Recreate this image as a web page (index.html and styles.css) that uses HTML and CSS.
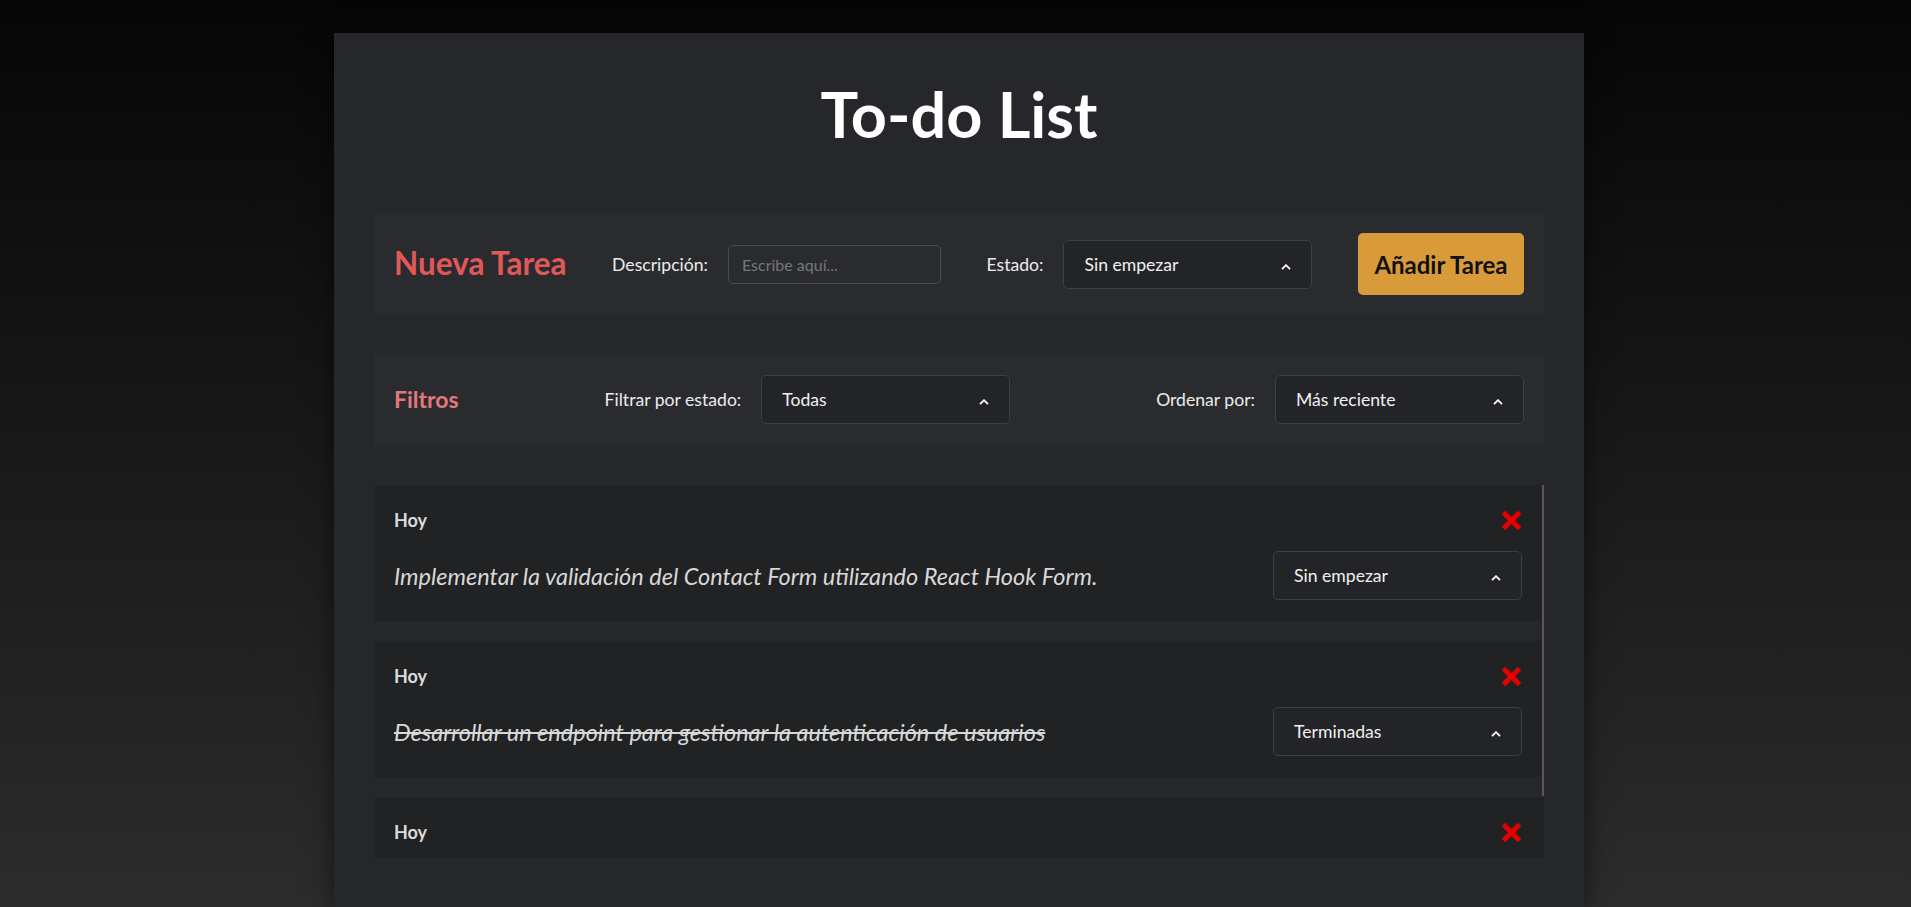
FILE: index.html
```html
<!DOCTYPE html>
<html lang="es">
<head>
<meta charset="utf-8">
<title>To-do List</title>
<link rel="stylesheet" href="styles.css">
</head>
<body>
<div class="page">
  <main class="panel">
    <h1 class="title">To-do List</h1>

    <section class="bar bar-new">
      <h2 class="bar-title">Nueva Tarea</h2>
      <label class="field">
        <span class="field-label">Descripción:</span>
        <input class="text-input" type="text" placeholder="Escribe aquí...">
      </label>
      <label class="field">
        <span class="field-label">Estado:</span>
        <span class="select">
          <select><option>Sin empezar</option><option>En progreso</option><option>Terminadas</option></select>
          <svg class="chev" viewBox="0 0 10 6"><polyline points="1,5.2 5,1.2 9,5.2"/></svg>
        </span>
      </label>
      <button class="add-btn" type="button">Añadir Tarea</button>
    </section>

    <section class="bar bar-filters">
      <h3 class="bar-title">Filtros</h3>
      <label class="field">
        <span class="field-label">Filtrar por estado:</span>
        <span class="select">
          <select><option>Todas</option><option>Sin empezar</option><option>En progreso</option><option>Terminadas</option></select>
          <svg class="chev" viewBox="0 0 10 6"><polyline points="1,5.2 5,1.2 9,5.2"/></svg>
        </span>
      </label>
      <label class="field">
        <span class="field-label">Ordenar por:</span>
        <span class="select">
          <select><option>Más reciente</option><option>Más antigua</option></select>
          <svg class="chev" viewBox="0 0 10 6"><polyline points="1,5.2 5,1.2 9,5.2"/></svg>
        </span>
      </label>
    </section>

    <div class="task-area">
      <div class="task-list">
        <article class="task">
          <div class="task-head">
            <span class="task-date">Hoy</span>
            <button class="del-btn" type="button" aria-label="Eliminar"><svg viewBox="0 0 21 21"><line x1="2.5" y1="2.5" x2="18.5" y2="18.5"/><line x1="18.5" y1="2.5" x2="2.5" y2="18.5"/></svg></button>
          </div>
          <div class="task-body">
            <p class="task-text">Implementar la validación del Contact Form utilizando React Hook Form.</p>
            <span class="select">
              <select><option>Sin empezar</option><option>En progreso</option><option>Terminadas</option></select>
              <svg class="chev" viewBox="0 0 10 6"><polyline points="1,5.2 5,1.2 9,5.2"/></svg>
            </span>
          </div>
        </article>

        <article class="task">
          <div class="task-head">
            <span class="task-date">Hoy</span>
            <button class="del-btn" type="button" aria-label="Eliminar"><svg viewBox="0 0 21 21"><line x1="2.5" y1="2.5" x2="18.5" y2="18.5"/><line x1="18.5" y1="2.5" x2="2.5" y2="18.5"/></svg></button>
          </div>
          <div class="task-body">
            <p class="task-text done">Desarrollar un endpoint para gestionar la autenticación de usuarios</p>
            <span class="select">
              <select><option>Terminadas</option><option>Sin empezar</option><option>En progreso</option></select>
              <svg class="chev" viewBox="0 0 10 6"><polyline points="1,5.2 5,1.2 9,5.2"/></svg>
            </span>
          </div>
        </article>

        <article class="task">
          <div class="task-head">
            <span class="task-date">Hoy</span>
            <button class="del-btn" type="button" aria-label="Eliminar"><svg viewBox="0 0 21 21"><line x1="2.5" y1="2.5" x2="18.5" y2="18.5"/><line x1="18.5" y1="2.5" x2="2.5" y2="18.5"/></svg></button>
          </div>
          <div class="task-body">
            <p class="task-text">Diseñar la interfaz del listado de tareas.</p>
            <span class="select">
              <select><option>En progreso</option><option>Sin empezar</option><option>Terminadas</option></select>
              <svg class="chev" viewBox="0 0 10 6"><polyline points="1,5.2 5,1.2 9,5.2"/></svg>
            </span>
          </div>
        </article>
      </div>
      <div class="scroll-thumb"></div>
    </div>
  </main>
</div>
</body>
</html>
```

FILE: styles.css
```css
* { box-sizing: border-box; }

html, body {
  margin: 0;
  height: 100%;
}

body {
  background: linear-gradient(180deg, #060606 0%, #2c2c2c 100%);
  font-family: Lato, "Open Sans", sans-serif;
  color: #e6e6e6;
  overflow: hidden;
}

.page {
  display: flex;
  justify-content: center;
  padding: 33px 0 0 7px;
  min-height: 100vh;
}

.panel {
  width: 1250px;
  min-height: calc(100vh - 33px);
  background: #26272a;
  padding: 45px 40px 40px;
  box-shadow: 0 0 24px rgba(0, 0, 0, 0.55);
  display: flex;
  flex-direction: column;
}

.title {
  margin: 0 0 63px;
  font-size: 63px;
  line-height: 72px;
  font-weight: 700;
  text-align: center;
  color: #ffffff;
}

.bar {
  display: flex;
  align-items: center;
  justify-content: space-between;
  background: #2a2b2e;
  padding: 20px;
  margin-bottom: 40px;
}

.bar-filters {
  padding: 20px 20px 21px;
}

.bar-title {
  margin: 0;
  font-weight: 700;
  line-height: 1.2;
}

.bar-new .bar-title {
  font-size: 31.5px;
  color: #e05858;
}

.bar-filters .bar-title {
  font-size: 23px;
  color: #e4777b;
}

.field {
  display: flex;
  align-items: center;
  gap: 20px;
}

.field-label {
  font-size: 17.6px;
  color: #ececec;
}

.text-input {
  width: 213px;
  height: 39px;
  background: transparent;
  border: 1px solid #4a4b4f;
  border-radius: 5px;
  padding: 0 13px;
  font: 16px Lato, "Open Sans", sans-serif;
  color: #dddddd;
  outline: none;
}

.text-input::placeholder {
  color: #77787b;
}

.select {
  position: relative;
  display: block;
  width: 249px;
  height: 49px;
  flex-shrink: 0;
}

.select select {
  appearance: none;
  -webkit-appearance: none;
  width: 100%;
  height: 100%;
  background: #232427;
  border: 1px solid #3e3f43;
  border-radius: 5px;
  color: #f0f0f0;
  font: 17.6px Lato, "Open Sans", sans-serif;
  padding: 0 40px 0 20px;
  outline: none;
}

.chev {
  position: absolute;
  right: 21px;
  top: 50%;
  margin-top: -0.5px;
  width: 10px;
  height: 6px;
  pointer-events: none;
  fill: none;
  stroke: #ffffff;
  stroke-width: 1.8;
}

.add-btn {
  width: 166px;
  height: 62px;
  background: #d99a3a;
  border: none;
  border-radius: 5px;
  color: #111111;
  font: 700 24px Lato, "Open Sans", sans-serif;
}

.task-area {
  position: relative;
  flex-shrink: 0;
}

.task-list {
  height: 373px;
  overflow-y: auto;
  scrollbar-width: none;
  display: flex;
  flex-direction: column;
  gap: 20px;
}

.task-list::-webkit-scrollbar {
  display: none;
}

.scroll-thumb {
  position: absolute;
  top: 0;
  right: 0;
  width: 2px;
  height: 311px;
  background: #5a5560;
}

.task {
  flex-shrink: 0;
  background: #212224;
  padding: 20px 22px 21px 20px;
  display: flex;
  flex-direction: column;
  gap: 16px;
}

.task-head {
  display: flex;
  justify-content: space-between;
  align-items: center;
  height: 30px;
}

.task-date {
  font-size: 18px;
  font-weight: 700;
  color: #dcdcdc;
}

.del-btn {
  background: none;
  border: none;
  padding: 0;
  width: 21px;
  height: 21px;
  display: block;
}

.del-btn svg {
  display: block;
  width: 21px;
  height: 21px;
  stroke: #e60000;
  stroke-width: 5;
}

.task-body {
  display: flex;
  align-items: center;
  justify-content: space-between;
  height: 49px;
}

.task-text {
  margin: 0;
  font-size: 23.5px;
  font-style: italic;
  color: #d8d8d8;
}

.task-text.done {
  text-decoration: line-through;
}
```
